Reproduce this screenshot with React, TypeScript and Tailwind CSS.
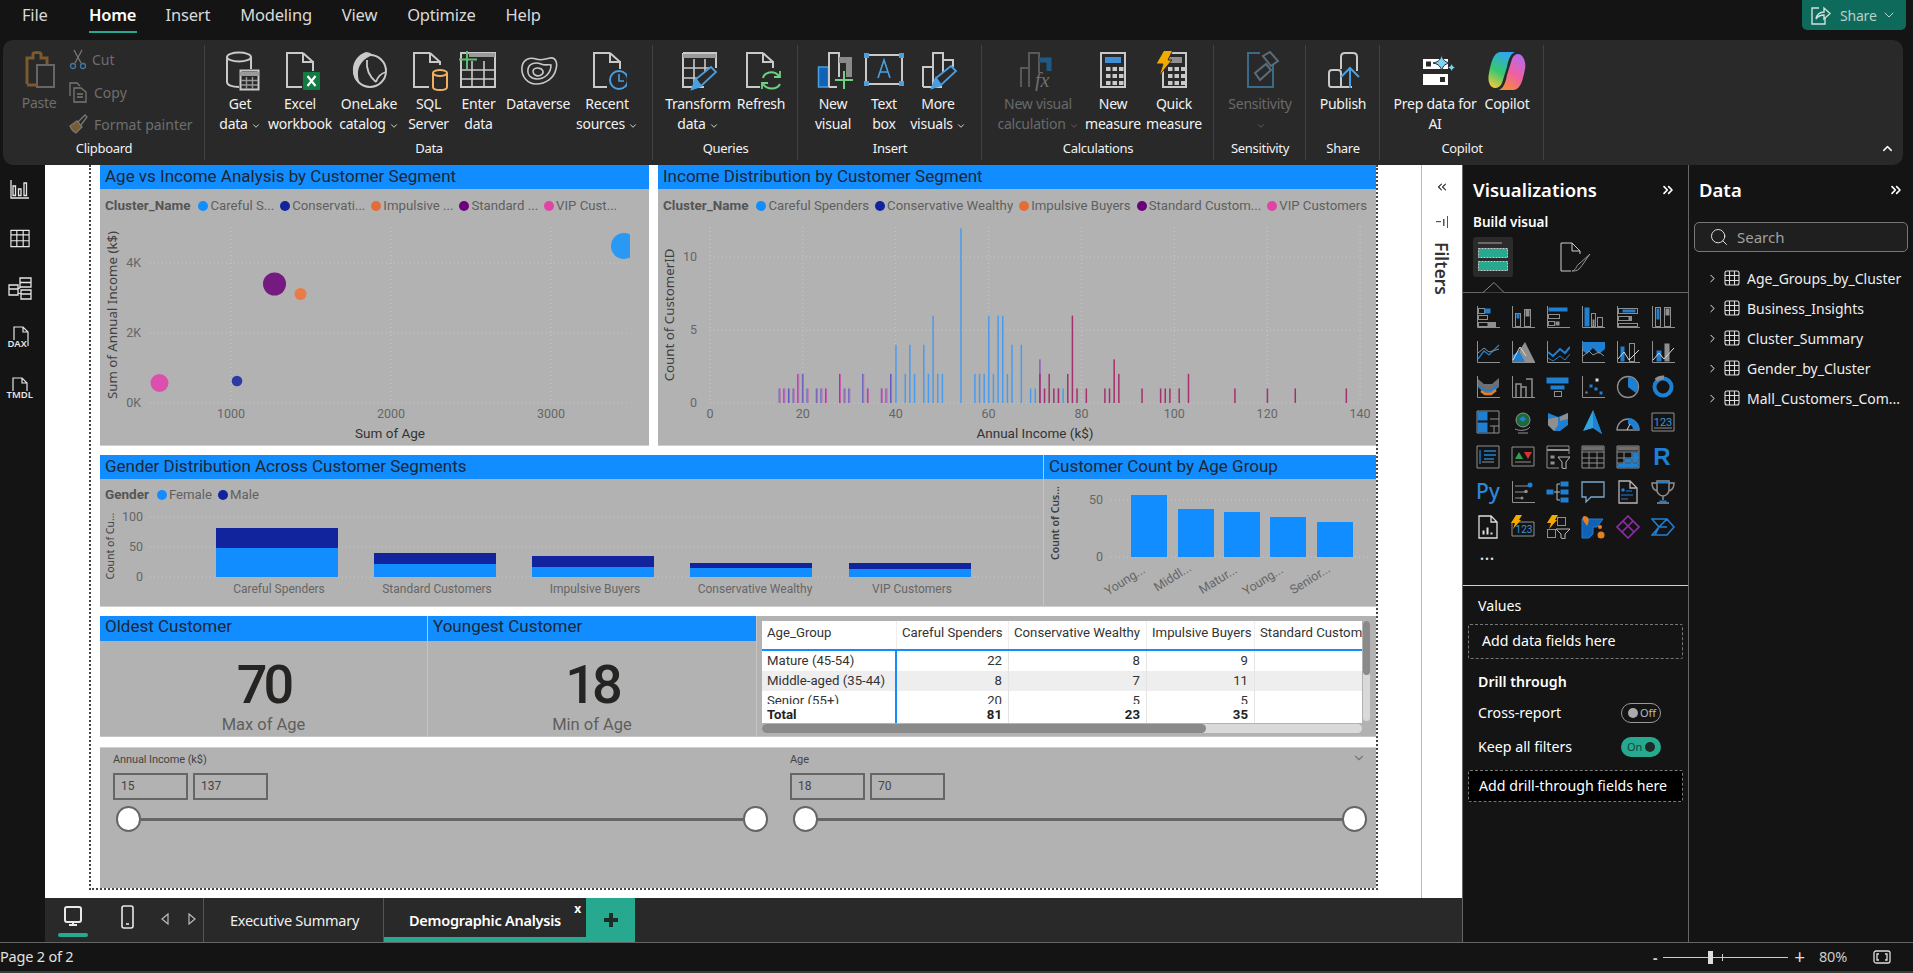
import type { ReactNode } from "react";
import { ChevronDown, ChevronRight, ChevronsRight, ChevronsLeft, ChevronUp, Search } from "lucide-react";

const S = "#c9c9c9";

function Ico({ w = 40, h = 40, children }: { w?: number; h?: number; children: ReactNode }) {
  return (
    <svg width={w} height={h} viewBox={`0 0 ${w} ${h}`} fill="none" strokeWidth="2" stroke={S} className="block">
      {children}
    </svg>
  );
}

function PencilIcon({ x, y, s = 1 }: { x: number; y: number; s?: number }) {
  return (
    <g transform={`translate(${x} ${y}) scale(${s})`} stroke="#4A9FE0" strokeWidth="1.8">
      <path d="M0 22L4 12L19 0L24 5L9 19Z" fill="#292929" />
      <path d="M0 22L4 12L9 19Z" fill="#4A9FE0" />
    </g>
  );
}

function CalcKeys({ x, y }: { x: number; y: number }) {
  const keys = [];
  for (let r = 0; r < 3; r++)
    for (let c = 0; c < 3; c++) keys.push(<rect key={`${r}${c}`} x={x + c * 6.5} y={y + r * 7} width="4.5" height="4" fill={S} stroke="none" />);
  return <>{keys}</>;
}

const GetDataIcon = () => (
  <Ico>
    <ellipse cx="19" cy="6" rx="12" ry="4.5" />
    <path d="M7 6V31C7 34 12 36 19 36M31 6V18" />
    <rect x="20.5" y="19.5" width="18" height="19" fill="#292929" />
    <path d="M20 23H39" strokeWidth="4" stroke="#9a9a9a" />
    <path d="M26.5 26V38M32.5 26V38M21 29.5H38M21 34H38" strokeWidth="1.4" stroke="#999" />
  </Ico>
);
const ExcelIcon = () => (
  <Ico>
    <path d="M23 2H7V36H22M23 2V11H33V20M23 2L33 11" />
    <rect x="23" y="21" width="17" height="18" rx="1" fill="#107C41" stroke="none" />
    <path d="M27.5 25L35.5 35M35.5 25L27.5 35" stroke="#fff" strokeWidth="2.2" />
  </Ico>
);
const OneLakeIcon = () => (
  <Ico>
    <circle cx="21" cy="20" r="16" fill="#292929" />
    <path d="M17 1C3 5 -1 24 11 33C6 20 10 9 24 4C22 2 19 1 17 1Z" fill={S} stroke="none" />
    <path d="M18 9C17 18 21 26 27 31M27 31C29 25 33 22 37 21" strokeWidth="1.8" />
  </Ico>
);
const SqlIcon = () => (
  <Ico>
    <path d="M21 2H5V36H20M21 2V11H31V14M21 2L31 11" />
    <ellipse cx="31" cy="22" rx="7" ry="3" stroke="#F0B05F" />
    <path d="M24 22V36C24 38 27 39 31 39S38 38 38 36V22" stroke="#F0B05F" />
  </Ico>
);
const EnterIcon = () => (
  <Ico>
    <path d="M2 2H36V36H2Z" />
    <path d="M10 4H36" strokeWidth="4" stroke="#9a9a9a" />
    <path d="M13 10V36M25 10V36M2 19H36M2 28H36" strokeWidth="1.6" />
    <path d="M8 0V18M0 8.5H18" stroke="#5FBF6F" strokeWidth="2" />
  </Ico>
);
const DataverseIcon = () => (
  <Ico>
    <path d="M4 16C5 8 12 6 18 8C24 10 28 8 32 7C37 6 40 11 38 18C36 27 28 33 18 33C10 33 3 26 4 16Z" strokeWidth="1.6" />
    <path d="M10 18C11 12 18 11 23 13C28 15 31 13 33 14C33 22 27 28 19 28C13 28 9 24 10 18Z" strokeWidth="1.6" />
    <path d="M15 20C16 16 23 16 25 20C26 24 20 26 17 24C15 23 15 22 15 20Z" strokeWidth="1.6" />
  </Ico>
);
const RecentIcon = () => (
  <Ico>
    <path d="M23 2H7V36H20M23 2V11H33V18M23 2L33 11" />
    <circle cx="32" cy="29" r="9" stroke="#4A9FE0" fill="#292929" />
    <path d="M32 23V30H37" stroke="#4A9FE0" strokeWidth="1.6" />
  </Ico>
);
const TransformIcon = () => (
  <Ico>
    <path d="M5 2H38V17M26 36H5V2" />
    <path d="M5 5H38" strokeWidth="4" stroke="#9a9a9a" />
    <path d="M16 8V36M27 8V30M5 17H34M5 27H26" strokeWidth="1.6" />
    <PencilIcon x={14} y={16} />
  </Ico>
);
const RefreshIcon = () => (
  <Ico>
    <path d="M22 2H6V36H19M22 2V11H32V17M22 2L32 11" />
    <path d="M22 27C23 22 32 18 38 25M39 33C36 39 26 39 22 33" stroke="#6FD07F" />
    <path d="M39 20V26H33M21 38V32H27" stroke="#6FD07F" strokeWidth="1.8" />
  </Ico>
);
const NewVisualIcon = () => (
  <Ico>
    <rect x="5.5" y="16" width="10" height="20" fill="#0F62B5" stroke="#4A9FE0" strokeWidth="1.5" />
    <path d="M16 36V2H26V26M16 36H24" />
    <path d="M26 9H36V26" stroke="#8a8a8a" strokeWidth="6" />
    <path d="M31 20V38M22 29H40" stroke="#6FD07F" />
  </Ico>
);
const TextBoxIcon = () => (
  <Ico>
    <rect x="2" y="4" width="36" height="29" />
    <rect x="0" y="2" width="5" height="5" fill="#4A9FE0" stroke="none" />
    <rect x="35" y="2" width="5" height="5" fill="#4A9FE0" stroke="none" />
    <rect x="0" y="30" width="5" height="5" fill="#4A9FE0" stroke="none" />
    <rect x="35" y="30" width="5" height="5" fill="#4A9FE0" stroke="none" />
    <path d="M14 27L20 9L26 27M16 21H24" stroke="#4A9FE0" strokeWidth="1.6" />
  </Ico>
);
const MoreVisualsIcon = () => (
  <Ico>
    <path d="M5 36V16H15M15 36V2H25V24M25 9H35V16M5 36H24" />
    <path d="M15 36V16" />
    <PencilIcon x={14} y={15} />
  </Ico>
);
const VisualCalcIcon = () => (
  <Ico>
    <path d="M3 36V17H11M11 36V2H21V22" stroke="#595959" />
    <path d="M21 9H31V20" stroke="#1E5A85" strokeWidth="5" />
    <text x="17" y="36" fontFamily="Liberation Serif" fontStyle="italic" fontSize="20" fill="#707070" stroke="none">
      fx
    </text>
  </Ico>
);
const NewMeasureIcon = () => (
  <Ico>
    <rect x="8" y="2" width="24" height="34" />
    <rect x="12" y="6" width="16" height="6" fill="#3F8FD8" stroke="none" />
    <CalcKeys x={13} y={16} />
  </Ico>
);
const QuickMeasureIcon = () => (
  <Ico>
    <rect x="9" y="2" width="23" height="34" />
    <rect x="14" y="6" width="14" height="6" fill="#8f8f8f" stroke="none" />
    <CalcKeys x={14} y={16} />
    <path d="M10 -1H19L14 9H18L5 25L9 13H2Z" fill="#F2A900" stroke="#292929" strokeWidth="1" />
  </Ico>
);
const SensitivityIcon = () => (
  <Ico>
    <path d="M20 2H8V36H33V14" stroke="#3C6A8A" />
    <path d="M15 22L26 13L31 19L20 29Z" stroke="#5b6d7a" />
    <path d="M23 5L30 1L38 10L31 15Z" stroke="#5b6d7a" />
  </Ico>
);
const PublishIcon = () => (
  <Ico>
    <path d="M18 18V6C18 3 20 2 22 2H30C32 2 34 3 34 6V20M18 36H29" />
    <path d="M8 36C6 36 6 34 6 33V22C6 20 7 19 9 19H15C17 19 18 20 18 22V36H8Z" />
    <path d="M27 37V17M18 26L27 17L36 26" stroke="#4A9FE0" />
  </Ico>
);
const PrepIcon = () => (
  <Ico>
    <rect x="8" y="8" width="25" height="10" fill="#fff" stroke="none" />
    <rect x="11" y="10.5" width="5" height="5" fill="#292929" stroke="none" />
    <rect x="8" y="23" width="25" height="11" fill="#fff" stroke="none" />
    <rect x="25" y="26" width="5" height="5" fill="#292929" stroke="none" />
    <path d="M27 2C27 8 29 11 35 12C29 13 27 16 27 21C26 16 24 13 18 12C24 11 26 8 27 2Z" fill="#7DD3F5" stroke="#292929" strokeWidth="1" />
    <path d="M37 13C37 15 38 16 40 16.500C38 17 37 18 37 20C36 18 35 17 33 16.500C35 16 36 15 37 13Z" fill="#7DD3F5" stroke="none" />
  </Ico>
);
const CopilotIcon = () => (
  <Ico>
    <defs>
      <linearGradient id="cpA" x1="0.6" y1="0" x2="0.2" y2="1">
        <stop offset="0" stopColor="#2FA6F0" />
        <stop offset="0.55" stopColor="#36C86F" />
        <stop offset="1" stopColor="#F6C93A" />
      </linearGradient>
      <linearGradient id="cpB" x1="0.8" y1="0" x2="0.3" y2="1">
        <stop offset="0" stopColor="#B46BEE" />
        <stop offset="0.55" stopColor="#F060A0" />
        <stop offset="1" stopColor="#F58A3C" />
      </linearGradient>
    </defs>
    <path d="M13 1H28C23 3 21 10 20 16L15 32C13 37 8 38 5 36C1 33 1 26 2 22C4 12 6 2 13 1Z" fill="url(#cpA)" stroke="none" />
    <path d="M27 39H12C17 37 19 30 20 24L25 8C27 3 31 2 34 4C38 7 39 14 38 18C36 28 34 38 27 39Z" fill="url(#cpB)" stroke="none" />
  </Ico>
);

function RibbonBtn({ icon, lines, caret, w, dim }: { icon: ReactNode; lines: string[]; caret?: boolean; w: string; dim?: boolean }) {
  return (
    <div className={`${w} shrink-0 flex flex-col items-center ${dim ? "text-[#6a6a6a]" : "text-[#f2f2f2]"}`}>
      <div className="h-[41px] flex items-center justify-center">{icon}</div>
      <div className="mt-[3px] flex flex-col items-center text-[14px] leading-[20px] whitespace-nowrap tracking-[-0.25px]">
        {lines.map((l, i) => (
          <div key={i} className="flex items-center h-[20px]">
            {l}
            {caret && i === lines.length - 1 && <ChevronDown size={10} strokeWidth={2} className="ml-[3px] mt-[3px]" />}
          </div>
        ))}
      </div>
    </div>
  );
}

function RibbonGroup({ label, w, pl, children }: { label: string; w: string; pl: string; children: ReactNode }) {
  return (
    <div className={`${w} shrink-0 h-full relative`}>
      <div className={`flex ${pl} pt-[10px] h-[100px]`}>{children}</div>
      <div className="text-center text-[13px] leading-[16px] text-[#f2f2f2] tracking-[-0.3px]">{label}</div>
      <div className="absolute right-0 top-[5px] bottom-[5px] w-px bg-[#414141]" />
    </div>
  );
}

function Ribbon() {
  return (
    <div className="mx-[3px] h-[125px] w-[1900px] bg-[#292929] rounded-[10px] flex relative">
      <div className="w-[202px] shrink-0 h-full relative">
        <div className="flex h-[100px] pt-[10px] pl-[17px] text-[#6e6e6e]">
          <div className="w-[38px] flex flex-col items-center">
            <Ico>
              <path d="M8 34V8H14V4C14 2 22 2 22 4V8H28V14" stroke="#7A5A2E" strokeWidth="3" />
              <rect x="18" y="15" width="17" height="22" stroke="#666" fill="#292929" />
              <path d="M8 35H18" stroke="#7A5A2E" strokeWidth="3" />
            </Ico>
            <div className="mt-[3px] text-[14px] leading-[20px] tracking-[-0.3px]">Paste</div>
          </div>
          <div className="ml-[10px] flex flex-col text-[14px]">
            <div className="flex items-center h-[20px] gap-[4px] -mt-[1px]">
              <svg width="20" height="22" viewBox="0 0 20 22" fill="none" strokeWidth="1.3" stroke="#777">
                <path d="M6 2L13 15M14 2L7 15" />
                <circle cx="5" cy="18" r="2.5" stroke="#3F7AA6" />
                <circle cx="15" cy="18" r="2.5" stroke="#3F7AA6" />
              </svg>
              Cut
            </div>
            <div className="flex items-center h-[20px] gap-[6px] mt-[13px]">
              <svg width="20" height="22" viewBox="0 0 20 22" fill="none" strokeWidth="1.3" stroke="#777">
                <path d="M2 15V2H9L12 5M6 21V7H13L18 11V21ZM9 13H15M9 16H15" />
              </svg>
              Copy
            </div>
            <div className="flex items-center h-[20px] gap-[6px] mt-[12px] whitespace-nowrap">
              <svg width="20" height="22" viewBox="0 0 20 22" fill="none" strokeWidth="1.3" stroke="#777">
                <path d="M2 13L9 8L14 14L8 20C6 19 4 18 2 13Z" fill="#7A5A2E" />
                <path d="M10 9L17 2L19 4L13 12" />
              </svg>
              Format painter
            </div>
          </div>
        </div>
        <div className="text-center text-[13px] leading-[16px] text-[#f2f2f2] tracking-[-0.3px]">Clipboard</div>
        <div className="absolute right-0 top-[5px] bottom-[5px] w-px bg-[#414141]" />
      </div>
      <RibbonGroup label="Data" w="w-[448px]" pl="pl-[12px]">
        <RibbonBtn w="w-[46px]" icon={<GetDataIcon />} lines={["Get", "data"]} caret />
        <RibbonBtn w="w-[74px]" icon={<ExcelIcon />} lines={["Excel", "workbook"]} />
        <RibbonBtn w="w-[64px]" icon={<OneLakeIcon />} lines={["OneLake", "catalog"]} caret />
        <RibbonBtn w="w-[55px]" icon={<SqlIcon />} lines={["SQL", "Server"]} />
        <RibbonBtn w="w-[45px]" icon={<EnterIcon />} lines={["Enter", "data"]} />
        <RibbonBtn w="w-[74px]" icon={<DataverseIcon />} lines={["Dataverse"]} />
        <RibbonBtn w="w-[64px]" icon={<RecentIcon />} lines={["Recent", "sources"]} caret />
      </RibbonGroup>
      <RibbonGroup label="Queries" w="w-[145px]" pl="pl-[10px]">
        <RibbonBtn w="w-[70px]" icon={<TransformIcon />} lines={["Transform", "data"]} caret />
        <RibbonBtn w="w-[56px]" icon={<RefreshIcon />} lines={["Refresh"]} />
      </RibbonGroup>
      <RibbonGroup label="Insert" w="w-[184px]" pl="pl-[10px]">
        <RibbonBtn w="w-[50px]" icon={<NewVisualIcon />} lines={["New", "visual"]} />
        <RibbonBtn w="w-[52px]" icon={<TextBoxIcon />} lines={["Text", "box"]} />
        <RibbonBtn w="w-[56px]" icon={<MoreVisualsIcon />} lines={["More", "visuals"]} caret />
      </RibbonGroup>
      <RibbonGroup label="Calculations" w="w-[232px]" pl="pl-[8px]">
        <RibbonBtn w="w-[96px]" dim icon={<VisualCalcIcon />} lines={["New visual", "calculation"]} caret />
        <RibbonBtn w="w-[54px]" icon={<NewMeasureIcon />} lines={["New", "measure"]} />
        <RibbonBtn w="w-[68px]" icon={<QuickMeasureIcon />} lines={["Quick", "measure"]} />
      </RibbonGroup>
      <RibbonGroup label="Sensitivity" w="w-[92px]" pl="pl-[2px]">
        <RibbonBtn w="w-[88px]" dim icon={<SensitivityIcon />} lines={["Sensitivity", ""]} caret />
      </RibbonGroup>
      <RibbonGroup label="Share" w="w-[74px]" pl="pl-0">
        <RibbonBtn w="w-[74px]" icon={<PublishIcon />} lines={["Publish"]} />
      </RibbonGroup>
      <RibbonGroup label="Copilot" w="w-[164px]" pl="pl-[10px]">
        <RibbonBtn w="w-[90px]" icon={<PrepIcon />} lines={["Prep data for", "AI"]} />
        <RibbonBtn w="w-[54px]" icon={<CopilotIcon />} lines={["Copilot"]} />
      </RibbonGroup>
      <ChevronUp size={15} strokeWidth={2.5} className="absolute right-[8px] bottom-[9px] text-[#eee]" />
    </div>
  );
}

function TopTabs() {
  const tabs = ["Insert", "Modeling", "View", "Optimize", "Help"];
  return (
    <div className="h-[40px] bg-[#141414] flex items-start relative text-[16.5px] text-[#d9d9d9] tracking-[-0.2px]">
      <div className="ml-[22px] mt-[4px] leading-[22px]">File</div>
      <div className="ml-[41px] mt-[4px] flex flex-col items-center">
        <div className="leading-[22px] font-semibold text-white">Home</div>
        <div className="w-[48px] h-[2px] mt-[5px] bg-[#26A98F]" />
      </div>
      <div className="flex ml-[29px] mt-[4px] leading-[22px] gap-[30px]">
        {tabs.map((t) => (
          <div key={t}>{t}</div>
        ))}
      </div>
      <div className="ml-auto mr-[7px] w-[104px] h-[30px] bg-[#0E6B5B] rounded-b-[5px] flex items-center pl-[8px] text-[14px] text-[#b9cfca]">
        <svg width="22" height="22" viewBox="0 0 22 22" fill="none" stroke="#cfe0dc" strokeWidth="1.4">
          <path d="M9 4H2V20H15V14" />
          <path d="M6 15C7 10 10 8 14 8V4L20 9.500L14 15V11C11 11 8 12 6 15Z" />
        </svg>
        <span className="ml-[8px]">Share</span>
        <ChevronDown size={16} strokeWidth={1.5} className="ml-[4px]" />
      </div>
    </div>
  );
}

function Visual({ title, w, children }: { title: string; w: string; children: ReactNode }) {
  return (
    <div className={`${w} h-full bg-[#B2B2B2] border-b border-[#cfcfcf] flex flex-col font-['Roboto',sans-serif] overflow-hidden`}>
      <div className="h-[24px] shrink-0 bg-[#118DFF] pl-[5px] text-[17px] leading-[22px] text-[#1d2733] whitespace-nowrap">{title}</div>
      {children}
    </div>
  );
}

const C = { careful: "#118DFF", cons: "#12239E", imp: "#E66C37", std: "#6B007B", vip: "#E044A7" };

function Dot({ c }: { c: string }) {
  const cls: Record<string, string> = {
    [C.careful]: "bg-[#118DFF]",
    [C.cons]: "bg-[#12239E]",
    [C.imp]: "bg-[#E66C37]",
    [C.std]: "bg-[#6B007B]",
    [C.vip]: "bg-[#E044A7]",
  };
  return <span className={`w-[10px] h-[10px] rounded-full ${cls[c]}`} />;
}

function Legend({ field, items, pad = "pt-[9px]" }: { field: string; items: [string, string][]; pad?: string }) {
  return (
    <div className={`h-[24px] shrink-0 pl-[5px] ${pad} flex items-center gap-[6px] text-[13.2px] text-[#5f5f5f] whitespace-nowrap`}>
      <span className="font-bold mr-[2px] text-[13.5px] text-[#555]">{field}</span>
      {items.map(([l, c]) => (
        <span key={l} className="flex items-center gap-[2px]">
          <Dot c={c} />
          {l}
        </span>
      ))}
    </div>
  );
}

const grid = { stroke: "#c9c9c9", strokeDasharray: "1 3", strokeWidth: 1 };
const tick = { fill: "#666", fontSize: 12.5, fontFamily: "Roboto" };
const axisTitle = { fill: "#333", fontSize: 13.5, fontFamily: "Roboto", textAnchor: "middle" as const };
const yTitle = { fill: "#3f3f3f", fontSize: 13.3, fontFamily: "Noto Sans", textAnchor: "middle" as const };

function ScatterChart() {
  return (
    <svg className="block shrink-0" width="549" height="233" viewBox="100 213 549 233">
      {[263, 333, 403].map((y) => (
        <line key={y} x1="150" x2="630" y1={y} y2={y} {...grid} />
      ))}
      {[231, 391, 551].map((x) => (
        <line key={x} x1={x} x2={x} y1="227" y2="403" {...grid} />
      ))}
      {[["4K", 267], ["2K", 337], ["0K", 407]].map(([t, y]) => (
        <text key={t} x="141" y={y} textAnchor="end" {...tick}>{t}</text>
      ))}
      {[["1000", 231], ["2000", 391], ["3000", 551]].map(([t, x]) => (
        <text key={t} x={x} y="418" textAnchor="middle" {...tick}>{t}</text>
      ))}
      <text x="390" y="438" {...axisTitle}>Sum of Age</text>
      <text transform="translate(117 315) rotate(-90)" {...yTitle}>Sum of Annual Income (k$)</text>
      <clipPath id="scatterClip"><rect x="100" y="213" width="530" height="233" /></clipPath>
      <g clipPath="url(#scatterClip)">
        <ellipse cx="624" cy="246" rx="13" ry="13" fill="#2A98F5" />
      </g>
      <ellipse cx="274.500" cy="284" rx="11.5" ry="11.5" fill="#751A80" />
      <circle cx="300.500" cy="294" r="6" fill="#E87B46" />
      <circle cx="159.500" cy="383" r="9" fill="#DD4FAE" />
      <circle cx="237" cy="381" r="5.300" fill="#2B3AA5" />
    </svg>
  );
}

const blueBars: [number, number][] = [
  [40, 4], [42, 2], [43, 4], [44, 2], [46, 4], [47, 2], [48, 6], [49, 2], [50, 2], [54, 12], [57, 2], [58, 2], [59, 2], [60, 6], [61, 2], [62, 6], [63, 6], [64, 2], [65, 4], [67, 4], [69, 1], [70, 1], [75, 1], [76, 1],
];
const redBars: [number, number][] = [
  [71, 2], [72, 1], [73, 2], [74, 1], [75, 1], [77, 2], [78, 6], [79, 1], [81, 1], [85, 1], [86, 1], [87, 3], [88, 2], [93, 1], [97, 1], [98, 1], [99, 1], [101, 1], [103, 2], [113, 1], [120, 1], [126, 1], [137, 1],
];
const lowBars: [number, number][] = [
  [15, 1], [16, 1], [17, 1], [18, 1], [19, 2], [20, 2], [21, 1], [23, 1], [24, 1], [25, 1], [28, 2], [29, 1], [30, 1], [33, 2], [34, 1], [37, 1], [38, 1], [39, 2],
];

function HistogramChart() {
  const px = (v: number) => 710 + v * 4.643;
  const py = (c: number) => 403 - c * 14.56;
  return (
    <svg className="block shrink-0" width="718" height="233" viewBox="658 213 718 233">
      {[257, 330, 403].map((y) => (
        <line key={y} x1="710" x2="1362" y1={y} y2={y} {...grid} />
      ))}
      {[0, 20, 40, 60, 80, 100, 120, 140].map((v) => (
        <g key={v}>
          <line x1={px(v)} x2={px(v)} y1="227" y2="403" {...grid} />
          <text x={px(v)} y="418" textAnchor="middle" {...tick}>{v}</text>
        </g>
      ))}
      {[["10", 261], ["5", 334], ["0", 407]].map(([t, y]) => (
        <text key={t} x="697" y={y} textAnchor="end" {...tick}>{t}</text>
      ))}
      <text x="1035" y="438" {...axisTitle}>Annual Income (k$)</text>
      <text transform="translate(674 315) rotate(-90)" {...yTitle}>Count of CustomerID</text>
      {lowBars.map(([v, c]) => (
        <g key={v}>
          <rect x={px(v) - 1} y={py(c)} width="1" height={c * 14.56} fill="#5B57C4" />
          <rect x={px(v)} y={py(c)} width="1" height={c * 14.56} fill="#C65CB4" />
        </g>
      ))}
      {blueBars.map(([v, c]) => (
        <rect key={v} x={px(v) - 0.5} y={py(c)} width="1.5" height={c * 14.56} fill="#4A9BEE" />
      ))}
      <rect x={px(71) - 0.5} y={py(3)} width="1.5" height={3 * 14.56} fill="#8A5CBF" />
      {redBars.map(([v, c]) => (
        <rect key={v} x={px(v) - 0.5} y={py(c)} width="1.5" height={c * 14.56} fill="#A5306E" />
      ))}
    </svg>
  );
}

function GenderChart() {
  const bars = [
    { x: 216, top: 528, mid: 548, label: "Careful Spenders", cx: 279 },
    { x: 374, top: 553, mid: 564, label: "Standard Customers", cx: 437 },
    { x: 532, top: 556, mid: 567, label: "Impulsive Buyers", cx: 595 },
    { x: 690, top: 563, mid: 568, label: "Conservative Wealthy", cx: 755 },
    { x: 849, top: 563, mid: 569, label: "VIP Customers", cx: 912 },
  ];
  return (
    <svg className="block shrink-0" width="943" height="104" viewBox="100 503 943 104">
      {[517, 547, 577].map((y) => (
        <line key={y} x1="150" x2="1040" y1={y} y2={y} {...grid} />
      ))}
      {[["100", 521], ["50", 551], ["0", 581]].map(([t, y]) => (
        <text key={t} x="143" y={y} textAnchor="end" {...tick}>{t}</text>
      ))}
      <text transform="translate(114 546) rotate(-90)" {...yTitle} fontSize="10.500">Count of Cu...</text>
      {bars.map((b) => (
        <g key={b.x}>
          <rect x={b.x} y={b.top} width="122" height={b.mid - b.top} fill="#12239E" />
          <rect x={b.x} y={b.mid} width="122" height={577 - b.mid} fill="#118DFF" />
          <text x={b.cx} y="593" textAnchor="middle" {...tick} fontSize="12">{b.label}</text>
        </g>
      ))}
    </svg>
  );
}

function AgeChart() {
  const bars = [
    [1130, 495], [1177, 509], [1223, 512], [1269, 517], [1316, 522],
  ];
  const labels: [string, number, number][] = [
    ["Young...", 1145, 572], ["Middl...", 1191, 570], ["Matur...", 1237, 572], ["Young...", 1283, 572], ["Senior...", 1330, 571],
  ];
  return (
    <svg className="block shrink-0" width="333" height="128" viewBox="1043 479 333 128">
      {[500, 557].map((y) => (
        <line key={y} x1="1110" x2="1370" y1={y} y2={y} {...grid} />
      ))}
      <text x="1102" y="504" textAnchor="end" {...tick}>50</text>
      <text x="1102" y="561" textAnchor="end" {...tick}>0</text>
      <text transform="translate(1058 523) rotate(-90)" {...yTitle} fontSize="10.500" fontWeight="600">Count of Cus...</text>
      {bars.map(([x, t]) => (
        <rect key={x} x={x} y={t} width="36" height={557 - t} fill="#118DFF" />
      ))}
      {labels.map(([t, x, y], i) => (
        <text key={i} transform={`translate(${x} ${y}) rotate(-32)`} textAnchor="end" {...tick}>{t}</text>
      ))}
    </svg>
  );
}

function Kpi({ title, value, label, w }: { title: string; value: string; label: string; w: string }) {
  return (
    <div className={`${w} h-full bg-[#B2B2B2] border-r border-b border-[#c4c4c4] flex flex-col font-['Roboto',sans-serif] overflow-hidden`}>
      <div className="h-[25px] shrink-0 bg-[#118DFF] pl-[5px] text-[17px] leading-[20px] text-[#1d2733]">{title}</div>
      <div className="text-center text-[54px] leading-[52px] mt-[18px] font-medium text-[#252423] tracking-[-4px]">{value}</div>
      <div className="text-center text-[16.500px] leading-[20px] mt-[4px] text-[#605E5C]">{label}</div>
    </div>
  );
}

const tableCols = "grid grid-cols-[135px_112px_138px_108px_107px]";

function Matrix() {
  const rows = [
    { name: "Mature (45-54)", v: ["22", "8", "9"], bg: "bg-white h-[20px]" },
    { name: "Middle-aged (35-44)", v: ["8", "7", "11"], bg: "bg-[#EEEEEE] h-[20px]" },
    { name: "Senior (55+)", v: ["20", "5", "5"], bg: "bg-white h-[13px]" },
  ];
  return (
    <div className="flex-1 h-full bg-[#B2B2B2] border-b border-[#c4c4c4] pl-[5px] pt-[5px] font-['Roboto',sans-serif] text-[13.2px] text-[#333] flex">
      <div className="w-[600px] shrink-0">
        <div className="h-[102px] bg-white overflow-hidden">
          <div className={`${tableCols} h-[30px] border-b-2 border-[#118DFF] leading-[24px] whitespace-nowrap`}>
            <div className="pl-[5px] border-r border-[#eee]">Age_Group</div>
            <div className="pl-[5px] border-r border-[#eee]">Careful Spenders</div>
            <div className="pl-[5px] border-r border-[#eee]">Conservative Wealthy</div>
            <div className="pl-[5px] border-r border-[#eee]">Impulsive Buyers</div>
            <div className="pl-[5px] overflow-hidden">Standard Customers</div>
          </div>
          {rows.map((r) => (
            <div key={r.name} className={`${tableCols} ${r.bg} leading-[20px] overflow-hidden`}>
              <div className="pl-[5px] border-r-2 border-[#118DFF]">{r.name}</div>
              {r.v.map((v, i) => (
                <div key={i} className="pr-[6px] text-right border-r border-[#e4e4e4]">{v}</div>
              ))}
              <div />
            </div>
          ))}
          <div className={`${tableCols} h-[19px] leading-[21px] font-bold text-[#222]`}>
            <div className="pl-[5px] border-r-2 border-[#118DFF]">Total</div>
            {["81", "23", "35"].map((v) => (
              <div key={v} className="pr-[6px] text-right border-r border-[#e4e4e4]">{v}</div>
            ))}
            <div />
          </div>
        </div>
        <div className="h-[9px] mt-[1px] bg-[#d9d9d9] rounded-full">
          <div className="w-[444px] h-full bg-[#8a8a8a] rounded-full" />
        </div>
      </div>
      <div className="w-[7px] h-[100px] ml-px bg-[#d9d9d9] rounded-full">
        <div className="h-[54px] bg-[#8a8a8a] rounded-full" />
      </div>
    </div>
  );
}

function SliderCol({ label, from, to, w }: { label: string; from: string; to: string; w: string }) {
  return (
    <div className={`${w} shrink-0 font-['Roboto',sans-serif]`}>
      <div className="text-[11px] leading-[14px] -mt-[1px] text-[#444] tracking-[-0.1px]">{label}</div>
      <div className="flex gap-[5px] mt-[6px]">
        {[from, to].map((v) => (
          <div key={v} className="w-[75px] h-[27px] border-2 border-[#666] pl-[6px] text-[12px] leading-[23px] text-[#444]">{v}</div>
        ))}
      </div>
      <div className="flex items-center mt-[6px] ml-[3px]">
        <span className="w-[25px] h-[26px] rounded-full bg-white border-2 border-[#666]" />
        <span className="flex-1 h-[3px] bg-[#666]" />
        <span className="w-[25px] h-[26px] rounded-full bg-white border-2 border-[#666]" />
      </div>
    </div>
  );
}

function Slicers() {
  return (
    <div className="h-[141px] mt-[10px] bg-[#B2B2B2] border-t border-[#d0d0d0] relative flex pl-[13px] pt-[6px] gap-0">
      <div className="w-[677px] shrink-0 pr-[22px]">
        <SliderCol label="Annual Income (k$)" from="15" to="137" w="w-full" />
      </div>
      <SliderCol label="Age" from="18" to="70" w="w-[577px]" />
      <ChevronDown size={14} className="absolute right-[10px] top-[3px] text-[#777]" />
    </div>
  );
}

function Canvas() {
  return (
    <div className="w-[1376px] h-[733px] bg-white">
      <div className="ml-[44px] w-[1289px] h-[725px] border-l-2 border-r-2 border-b-2 border-dotted border-[#444] pl-[9px]">
        <div className="flex gap-[9px] h-[281px]">
          <Visual title="Age vs Income Analysis by Customer Segment" w="w-[549px]">
            <Legend
              field="Cluster_Name"
              items={[["Careful S...", C.careful], ["Conservati...", C.cons], ["Impulsive ...", C.imp], ["Standard ...", C.std], ["VIP Cust...", C.vip]]}
            />
            <ScatterChart />
          </Visual>
          <Visual title="Income Distribution by Customer Segment" w="w-[718px]">
            <Legend
              field="Cluster_Name"
              items={[["Careful Spenders", C.careful], ["Conservative Wealthy", C.cons], ["Impulsive Buyers", C.imp], ["Standard Custom...", C.std], ["VIP Customers", C.vip]]}
            />
            <HistogramChart />
          </Visual>
        </div>
        <div className="flex h-[152px] mt-[9px]">
          <Visual title="Gender Distribution Across Customer Segments" w="w-[943px]">
            <Legend pad="pt-[7px]" field="Gender" items={[["Female", C.careful], ["Male", C.cons]]} />
            <GenderChart />
          </Visual>
          <div className="w-px h-full bg-[#c4c4c4]" />
          <Visual title="Customer Count by Age Group" w="w-[332px]">
            <AgeChart />
          </Visual>
        </div>
        <div className="flex h-[121px] mt-[9px]">
          <Kpi title="Oldest Customer" value="70" label="Max of Age" w="w-[328px]" />
          <Kpi title="Youngest Customer" value="18" label="Min of Age" w="w-[329px]" />
          <Matrix />
        </div>
        <Slicers />
      </div>
    </div>
  );
}

function FiltersPane() {
  return (
    <div className="w-[41px] h-[733px] bg-white border-l border-[#b8b8b8] flex flex-col items-center pt-[15px] text-[#333]">
      <ChevronsLeft size={14} strokeWidth={2} />
      <svg width="12" height="14" viewBox="0 0 12 14" className="mt-[22px]" fill="#555">
        <rect x="0" y="5" width="5" height="1.200" />
        <rect x="7" y="3" width="1.500" height="7" />
        <rect x="11" y="0" width="1" height="12" />
      </svg>
      <div className="mt-[12px] text-[17.5px] font-semibold leading-[18px] text-[#333] [writing-mode:vertical-rl]">Filters</div>
    </div>
  );
}

function PageTabs() {
  return (
    <div className="h-[44px] bg-[#292929] border-t-0 flex text-[14.500px] tracking-[-0.25px]">
      <div className="w-[159px] shrink-0 flex border-r border-[#555] h-full">
        <div className="w-[54px] flex flex-col items-center pt-[7px] pl-[1px]">
          <svg width="20" height="22" viewBox="0 0 20 22" fill="none" stroke="#e8e8e8" strokeWidth="2">
            <rect x="2" y="2" width="16" height="15" rx="2" />
            <path d="M6 20H14M10 17V20" />
          </svg>
          <div className="w-[30px] h-[4px] rounded-sm bg-[#26A98F] mt-[6px]" />
        </div>
        <svg width="16" height="26" viewBox="0 0 16 26" fill="none" stroke="#e8e8e8" strokeWidth="1.6" className="ml-[21px] mt-[6px]">
          <rect x="2" y="2" width="11" height="22" rx="2" />
          <path d="M6 20H9" />
        </svg>
        <div className="flex gap-[17px] ml-[24px] mt-[15px]">
          <svg width="10" height="12" viewBox="0 0 10 12" fill="none" stroke="#bbb" strokeWidth="1.200"><path d="M8 1L2 6L8 11Z" /></svg>
          <svg width="10" height="12" viewBox="0 0 10 12" fill="none" stroke="#bbb" strokeWidth="1.200"><path d="M2 1L8 6L2 11Z" /></svg>
        </div>
      </div>
      <div className="w-[180px] shrink-0 pl-[26px] border-r border-[#555] leading-[44px] text-[#f0f0f0]">Executive Summary</div>
      <div className="w-[202px] shrink-0 pl-[25px] leading-[44px] h-full border-b-[5px] border-[#26A98F] font-semibold text-white relative">
        Demographic Analysis
        <span className="absolute right-[5px] top-[3px] text-[12px] leading-[16px] font-bold">x</span>
      </div>
      <div className="w-[49px] shrink-0 bg-[#26A98F] flex items-center justify-center">
        <svg width="16" height="16" viewBox="0 0 16 16" fill="#1b2b28"><path d="M6 1H10V6H15V10H10V15H6V10H1V6H6Z" /></svg>
      </div>
    </div>
  );
}

function Rail() {
  return (
    <div className="w-[45px] shrink-0 bg-[#141414] flex flex-col items-center pr-[6px] text-[#e5e5e5]">
      <div className="h-[49px] flex items-center">
        <svg width="20" height="21" viewBox="0 0 20 21" fill="none" stroke="currentColor" strokeWidth="1.300">
          <path d="M1 1V19H19M3 7H5.500V16.500H3ZM8.500 10H11V16.500H8.500ZM14 4H16.500V16.500H14Z" />
        </svg>
      </div>
      <div className="h-[49px] flex items-center">
        <svg width="20" height="19" viewBox="0 0 22 20" fill="none" stroke="currentColor" strokeWidth="1.300">
          <path d="M1 1H21V19H1ZM1 6H21M1 12.500H21M7.500 1V19M14.500 1V19" />
        </svg>
      </div>
      <div className="h-[50px] flex items-center">
        <svg width="24" height="24" viewBox="0 0 24 24" fill="none" stroke="currentColor" strokeWidth="1.300">
          <path d="M12 2H23V11H12ZM12 6.500H23M1 9H10V19H1ZM1 13H10M13 14H23V23H13ZM13 18H23M10 13L13 11M10 17L13 18" />
        </svg>
      </div>
      <div className="h-[51px] flex items-center">
        <div className="relative w-[24px] h-[26px]">
          <svg width="24" height="26" viewBox="0 0 24 26" fill="none" stroke="currentColor" strokeWidth="1.200">
            <path d="M6 14V1H15L20 6V20M15 1V6H20" />
          </svg>
          <span className="absolute left-0 top-[13px] text-[9.5px] leading-[10px] font-semibold">DAX</span>
        </div>
      </div>
      <div className="h-[51px] flex items-center">
        <div className="relative w-[26px] h-[26px]">
          <svg width="26" height="26" viewBox="0 0 26 26" fill="none" stroke="currentColor" strokeWidth="1.200">
            <path d="M6 14V1H15L20 6V14M15 1V6H20" />
          </svg>
          <span className="absolute left-0 top-[13px] text-[9.5px] leading-[10px] font-semibold">TMDL</span>
        </div>
      </div>
    </div>
  );
}

const G = "#8f8f8f";
const B = "#1f7fd1";
const Ax = <path d="M1.500 1V22.500H24" stroke={G} fill="none" />;
const Box = ({ x, y, w, h, c }: { x: number; y: number; w: number; h: number; c?: string }) => (
  <rect x={x + 0.5} y={y + 0.5} width={w - 1} height={h - 1} fill={c ?? "none"} stroke={c ? "none" : G} />
);

const vizIcons: ReactNode[] = [
  <>{Ax}<Box x={2} y={3} w={7} h={6} /><Box x={8} y={3} w={7} h={6} c={B} /><Box x={2} y={10} w={10} h={5} /><Box x={2} y={17} w={18} h={5} /><Box x={11} y={17} w={9} h={5} c={G} /></>,
  <>{Ax}<Box x={4} y={8} w={6} h={14} /><Box x={5} y={8} w={4} h={6} c={B} /><Box x={13} y={4} w={7} h={18} /><Box x={14} y={4} w={5} h={8} c={G} /></>,
  <>{Ax}<Box x={2} y={2} w={20} h={5} c={B} /><Box x={2} y={9} w={12} h={5} /><Box x={2} y={16} w={7} h={5} /><Box x={9} y={16} w={5} h={5} c={G} /></>,
  <>{Ax}<Box x={3} y={2} w={6} h={20} c={B} /><Box x={10} y={8} w={5} h={14} /><Box x={16} y={12} w={6} h={10} /><Box x={11} y={14} w={3} h={8} c={G} /></>,
  <>{Ax}<Box x={2} y={3} w={20} h={6} /><Box x={6} y={4} w={14} h={4} c={B} /><Box x={2} y={11} w={14} h={5} /><Box x={2} y={18} w={20} h={4} /><Box x={12} y={11} w={4} h={5} c={G} /></>,
  <>{Ax}<Box x={4} y={2} w={6} h={20} /><Box x={5} y={3} w={4} h={12} c={B} /><Box x={13} y={2} w={7} h={20} /><Box x={14} y={3} w={5} h={8} c={G} /></>,
  <>{Ax}<path d="M2 19L8 11L13 15L23 5" stroke={B} fill="none" strokeWidth="1.300" /><path d="M2 13L8 8L13 12L23 9" stroke={G} fill="none" /></>,
  <>{Ax}<path d="M2 22V15L8 11L13 16L16 22Z" fill={B} /><path d="M8 11L14 2L24 22H14Z" fill={G} /><path d="M2 20L9 7L15 16" stroke="#ddd" fill="none" /></>,
  <>{Ax}<path d="M2 12L7 16L14 9L19 13L24 7" stroke={B} strokeWidth="2" fill="none" /><path d="M2 18L7 21L14 16L19 20L24 14" stroke={B} fill="none" /></>,
  <>{Ax}<path d="M1 2H24V9L18 14L12 8L6 14L2 11Z" fill={B} /><path d="M2 16L8 11L12 15L18 12L23 16" stroke={G} fill="none" /></>,
  <>{Ax}<Box x={4} y={6} w={5} h={16} c={B} /><Box x={13} y={3} w={6} h={19} /><path d="M2 19L8 12L13 20L23 10" stroke="#ddd" fill="none" /></>,
  <>{Ax}<Box x={5} y={10} w={6} h={12} c={B} /><Box x={13} y={3} w={6} h={19} c={G} /><path d="M2 20L8 13L13 19L23 8" stroke="#ddd" fill="none" /></>,
  <>{Ax}<path d="M2 4L8 9L16 9L23 3V12L16 18H8L2 12Z" fill="#6f6f6f" /><path d="M3 11L8 15H16L22 10" stroke={B} strokeWidth="2" fill="none" /><path d="M5 16L9 19H15L20 15" stroke="#E77E22" strokeWidth="2.500" fill="none" /></>,
  <>{Ax}<path d="M5 22V9H10V22M10 12H15V22M15 4H21V22" stroke={G} fill="none" strokeWidth="1.500" /></>,
  <><Box x={0} y={2} w={23} h={7} c={B} /><Box x={4} y={10} w={15} h={5} c={B} /><Box x={8} y={16} w={8} h={6} /></>,
  <>{Ax}<Box x={14} y={3} w={4} h={4} c="#ddd" /><Box x={8} y={9} w={4} h={4} c={B} /><Box x={13} y={12} w={4} h={4} c={B} /><Box x={18} y={16} w={4} h={4} c={B} /><Box x={4} y={16} w={3} h={3} c={G} /></>,
  <><circle cx="12" cy="12" r="10.500" fill="none" stroke={G} strokeWidth="1.300" /><path d="M12 2A10 10 0 0 1 20 18L12 12Z" fill={B} /></>,
  <><circle cx="12" cy="12" r="8.500" fill="none" stroke={B} strokeWidth="4" /><path d="M5 5A10 10 0 0 1 13 2.500" stroke={G} strokeWidth="4" fill="none" /></>,
  <><path d="M1 1H23V23H1Z" fill="none" stroke={G} /><Box x={1} y={1} w={11} h={10} c={B} /><Box x={1} y={12} w={11} h={11} c={B} /><path d="M14 9H23M14 16H23M18 16V23" stroke={G} fill="none" /></>,
  <><circle cx="12" cy="10" r="7" fill="#1c6a3a" stroke={G} /><path d="M8 9L12 6L15 9L12 12Z" fill={B} /><path d="M4 19C8 21 16 21 19 17M7 23H17" stroke={G} fill="none" /></>,
  <><path d="M2 3L12 7L22 3V15L14 21H8L2 15Z" fill={B} /><path d="M2 9L12 7V15L8 21L2 15Z" fill={G} /><path d="M14 7L22 3V9L14 11Z" fill={G} /></>,
  <><path d="M12 0L21 24L12 18L2 21Z" fill="#33A3DC" /><path d="M12 0L12 18L21 24Z" fill={B} /></>,
  <><path d="M1 20A11 11 0 0 1 23 20Z" fill="none" stroke={G} strokeWidth="1.300" /><path d="M12 8A11 11 0 0 1 23 20H17A6 6 0 0 0 12 14Z" fill={B} /><path d="M11 20L14 14" stroke="#ddd" /></>,
  <><path d="M1 3H23V21H1Z" fill="none" stroke={G} /><path d="M3 18H21" stroke={G} /><text x="12" y="15.500" fontSize="11" textAnchor="middle" fill="#3a96dd" fontFamily="Roboto">123</text></>,
  <><path d="M1 1H23V23H1Z" fill="none" stroke={G} /><path d="M4 5V19M8 6H20M8 10H20M8 14H18" stroke={B} fill="none" strokeWidth="1.300" /><path d="M6 17H18" stroke={G} /></>,
  <><path d="M1 2H23V21H1Z" fill="none" stroke={G} /><path d="M4 14L8 7L12 14Z" fill="#2e9e4f" /><path d="M13 7H21L17 14Z" fill="#d13438" /><path d="M4 17H20" stroke={G} /></>,
  <><path d="M13 23H1V1H23V9" fill="none" stroke={G} /><path d="M1 5H23" stroke={G} strokeWidth="2" /><Box x={4} y={10} w={5} h={4} c={G} /><Box x={4} y={16} w={5} h={4} c={G} /><path d="M12 12H24L20 17V24L16 23V17Z" fill="#141414" stroke="#bbb" /></>,
  <><path d="M1 1H23V23H1ZM1 7H23M1 13H23M1 18H23M8 7V23M16 7V23" fill="none" stroke={G} /><Box x={1} y={1} w={22} h={5} c="#6f6f6f" /></>,
  <><path d="M1 1H23V23H1ZM1 7H23M1 13H23M1 18H23M8 7V23M16 7V23" fill="none" stroke={G} /><Box x={1} y={1} w={22} h={5} c="#6f6f6f" /><Box x={16} y={7} w={7} h={11} c={B} /><Box x={8} y={13} w={8} h={5} c={B} /><Box x={1} y={18} w={22} h={5} c={B} /></>,
  <text x="11" y="20" fontSize="24" fontWeight="700" textAnchor="middle" fill="#1f7fd1" fontFamily="Liberation Sans">R</text>,
  <text x="12" y="19" fontSize="21" fontWeight="500" textAnchor="middle" fill="#2b88d8" fontFamily="Noto Sans">Py</text>,
  <>{Ax}<path d="M4 6H18M4 12H14M4 18H10" stroke={G} fill="none" /><circle cx="19" cy="5" r="2.500" fill={B} /><circle cx="15" cy="11.500" r="1.800" fill={G} /><circle cx="11" cy="18" r="1.500" fill={G} /></>,
  <><Box x={0} y={9} w={8} h={6} c={B} /><Box x={14} y={1} w={9} h={6} c={B} /><Box x={14} y={9} w={9} h={6} c={B} /><Box x={14} y={17} w={9} h={6} c={B} /><path d="M8 12H11M11 4V20M11 4H14M11 12H14M11 20H14" stroke="#bbb" fill="none" /></>,
  <><path d="M1 2H23V17H10L5 22V17H1Z" fill="none" stroke="#7aa7cf" strokeWidth="1.300" /></>,
  <><path d="M14 1H3V23H21V8ZM14 1V8H21" fill="none" stroke="#b5b5b5" strokeWidth="1.300" /><circle cx="7" cy="10" r="1.800" fill={B} /><path d="M5 15H17M10 11H16M5 19H12" stroke={B} fill="none" /></>,
  <><path d="M6 1H18V10C18 14 14 16 12 16C10 16 6 14 6 10ZM6 3H1C1 8 3 10 6 11M18 3H23C23 8 21 10 18 11M12 16V20M6 23H18" fill="none" stroke={G} strokeWidth="1.500" /><Box x={6} y={1} w={12} h={3} c={B} /><Box x={8} y={20} w={8} h={3} c={B} /></>,
  <><path d="M15 1H3V23H21V7ZM15 1V7H21" fill="none" stroke="#ddd" strokeWidth="1.300" /><Box x={6} y={15} w={3} h={5} c="#ddd" /><Box x={10} y={12} w={3} h={8} c="#ddd" /><Box x={14} y={17} w={3} h={3} c="#ddd" /></>,
  <><path d="M1 7H23V21H1Z" fill="none" stroke={G} /><text x="13" y="18" fontSize="10" textAnchor="middle" fill="#3a96dd" fontFamily="Roboto">123</text><path d="M5 0H11L8 5H10L2 14L4 8H0Z" fill="#F2A900" /></>,
  <><Box x={1} y={14} w={9} h={9} /><Box x={11} y={2} w={9} h={9} /><path d="M10 14H24L19 19V24L15 23V19Z" fill="#141414" stroke="#bbb" /><path d="M6 0H12L9 5H11L3 14L5 8H1Z" fill="#F2A900" /></>,
  <><path d="M1 23V4H22L16 12H12V19L8 23Z" fill="#0F62B5" stroke={B} /><path d="M3 1C8 1 9 5 6 11C2 5 0 3 3 1Z" fill="#E67E22" /><circle cx="20" cy="20" r="3.500" fill="#E67E22" /><circle cx="19" cy="12" r="2" fill="#E67E22" /></>,
  <><path d="M12 1L23 12L12 23L1 12Z" fill="none" stroke="#8E2DA8" strokeWidth="1.600" /><path d="M7 6L18 17M17 6L6 17" stroke="#8E2DA8" strokeWidth="1.600" /></>,
  <><path d="M1 4H16L23 12L16 20H1L8 12ZM8 12H16M16 4L8 12L4 20" fill="none" stroke="#1f7fd1" strokeWidth="1.600" /></>,
];

function Toggle({ on }: { on?: boolean }) {
  if (on)
    return (
      <div className="w-[40px] h-[20px] rounded-full bg-[#26A98F] flex items-center justify-between pl-[6px] pr-[6px] text-[11px] text-[#11463c]">
        On<span className="w-[10px] h-[10px] rounded-full bg-[#1d2a27]" />
      </div>
    );
  return (
    <div className="w-[40px] h-[20px] rounded-full border border-[#999] flex items-center pl-[6px] gap-[2px] text-[11px] text-[#bbb]">
      <span className="w-[10px] h-[10px] rounded-full bg-[#aaa]" />Off
    </div>
  );
}

function VizPane() {
  return (
    <div className="w-[226px] shrink-0 bg-[#141414] border-l border-[#666] text-white flex flex-col text-[14.2px]">
      <div className="flex items-center justify-between h-[26px] mt-[12px] pl-[10px] pr-[12px] text-[18.5px] font-semibold">
        Visualizations
        <ChevronsRight size={16} strokeWidth={2.5} />
      </div>
      <div className="h-[18px] mt-[10px] pl-[10px] font-semibold leading-[18px] text-[13.5px]">Build visual</div>
      <div className="flex items-center mt-[6px] pl-[10px]">
        <div className="w-[40px] h-[40px] bg-[#2b2b2b] rounded-[3px] flex items-center justify-center">
          <svg width="30" height="30" viewBox="0 0 30 30" fill="none">
            <path d="M0 1H24" stroke="#aaa" />
            <rect x="0.500" y="6.500" width="29" height="9" fill="#26A98F" stroke="#ccc" strokeDasharray="2 1" />
            <rect x="0.500" y="19.500" width="29" height="9" fill="#26A98F" stroke="#ccc" strokeDasharray="2 1" />
          </svg>
        </div>
        <svg width="32" height="32" viewBox="0 0 32 32" fill="none" stroke="#ccc" className="ml-[46px]">
          <path d="M13 2H2V30H12M13 2V10H21V13M13 2L21 10" />
          <path d="M13 30C18 29 17 24 20 23L31 13C27 18 24 24 20 28C18 30 15 30 13 30Z" stroke="#999" />
        </svg>
      </div>
      <div className="mt-[15px] h-px bg-[#666] relative shrink-0">
        <svg width="22" height="11" viewBox="0 0 22 11" className="absolute left-[20px] -top-[10px]" fill="#141414" stroke="#888">
          <path d="M0 10.500L11 0.500L21 10.500" />
        </svg>
      </div>
      <div className="grid grid-cols-[repeat(6,35px)] auto-rows-[35px] pl-[7px] mt-[6px]">
        {vizIcons.map((ic, i) => (
          <div key={i} className="flex items-center justify-center">
            <svg width="24" height="24" viewBox="0 0 24 24">{ic}</svg>
          </div>
        ))}
        <div className="flex items-start justify-center text-[#ddd] text-[14px] font-bold h-[30px] tracking-[1px]">...</div>
      </div>
      <div className="mt-[6px] h-px bg-[#cfcfcf] shrink-0" />
      <div className="pl-[15px] mt-[10px] leading-[20px]">Values</div>
      <div className="mx-[5px] mt-[8px] h-[35px] border border-dashed border-[#777] rounded-[2px] pl-[13px] leading-[32px]">Add data fields here</div>
      <div className="pl-[15px] mt-[13px] leading-[20px] font-semibold">Drill through</div>
      <div className="flex items-center justify-between pl-[15px] pr-[27px] mt-[11px] h-[20px]">
        Cross-report
        <Toggle />
      </div>
      <div className="flex items-center justify-between pl-[15px] pr-[27px] mt-[14px] h-[20px]">
        Keep all filters
        <Toggle on />
      </div>
      <div className="mx-[5px] mt-[13px] h-[32px] bg-black border border-dashed border-[#777] rounded-[2px] pl-[10px] leading-[30px] whitespace-nowrap">Add drill-through fields here</div>
    </div>
  );
}

function DataPane() {
  const tables = ["Age_Groups_by_Cluster", "Business_Insights", "Cluster_Summary", "Gender_by_Cluster", "Mall_Customers_Com..."];
  return (
    <div className="w-[225px] shrink-0 bg-[#141414] border-l border-[#666] text-white flex flex-col">
      <div className="flex items-center justify-between h-[26px] mt-[12px] pl-[10px] pr-[9px] text-[18.5px] font-semibold">
        Data
        <ChevronsRight size={16} strokeWidth={2.5} />
      </div>
      <div className="mx-[5px] mt-[19px] h-[30px] border border-[#777] rounded-[5px] bg-[#1f1f1f] flex items-center pl-[14px] gap-[8px] text-[15px] text-[#a0a0a0]">
        <Search size={20} strokeWidth={1.2} className="text-[#ddd]" />
        Search
      </div>
      <div className="mt-[11px]">
        {tables.map((t) => (
          <div key={t} className="h-[30px] flex items-center pl-[17px] text-[14px] text-[#eee] whitespace-nowrap">
            <ChevronRight size={13} strokeWidth={1.8} />
            <svg width="16" height="16" viewBox="0 0 16 16" fill="none" stroke="#ddd" strokeWidth="1.100" className="ml-[5px] mr-[7px]">
              <rect x="1" y="1" width="14" height="14" rx="2" />
              <path d="M1 5.500H15M1 10.500H15M5.500 1V15M10.500 1V15" />
            </svg>
            {t}
          </div>
        ))}
      </div>
    </div>
  );
}

function StatusBar() {
  return (
    <div className="h-[29px] bg-[#141414] border-t border-[#666] flex items-center text-[14.5px] text-[#e0e0e0] tracking-[-0.2px]">
      <span>Page 2 of 2</span>
      <div className="ml-auto flex items-center mr-[22px]">
        <span className="text-[14px] font-bold text-[#ccc]">-</span>
        <div className="ml-[6px] w-[125px] h-px bg-[#ccc] flex items-center pl-[45px]">
          <span className="w-[5px] h-[13px] bg-[#ddd]" />
          <span className="ml-[9px] w-px h-[7px] bg-[#ccc]" />
        </div>
        <span className="ml-[6px] text-[19px] leading-[19px] text-[#ddd]">+</span>
        <span className="ml-[14px] text-[#ccc] text-[14.500px]">80%</span>
        <svg width="18" height="14" viewBox="0 0 18 14" fill="none" stroke="#ddd" strokeWidth="1.300" className="ml-[26px]">
          <rect x="1" y="1" width="16" height="12" rx="2" />
          <path d="M6 4H4V10H6M12 4H14V10H12" />
        </svg>
      </div>
    </div>
  );
}

export default function App() {
  return (
    <div className="w-[1913px] h-[973px] bg-[#141414] overflow-hidden flex flex-col font-['Noto_Sans',sans-serif]">
      <TopTabs />
      <Ribbon />
      <div className="flex h-[777px]">
        <Rail />
        <div className="w-[1417px] shrink-0 flex flex-col">
          <div className="flex h-[733px]">
            <Canvas />
            <FiltersPane />
          </div>
          <PageTabs />
        </div>
        <VizPane />
        <DataPane />
      </div>
      <StatusBar />
      <div className="h-[2px] bg-[#3a3a3a]" />
    </div>
  );
}
